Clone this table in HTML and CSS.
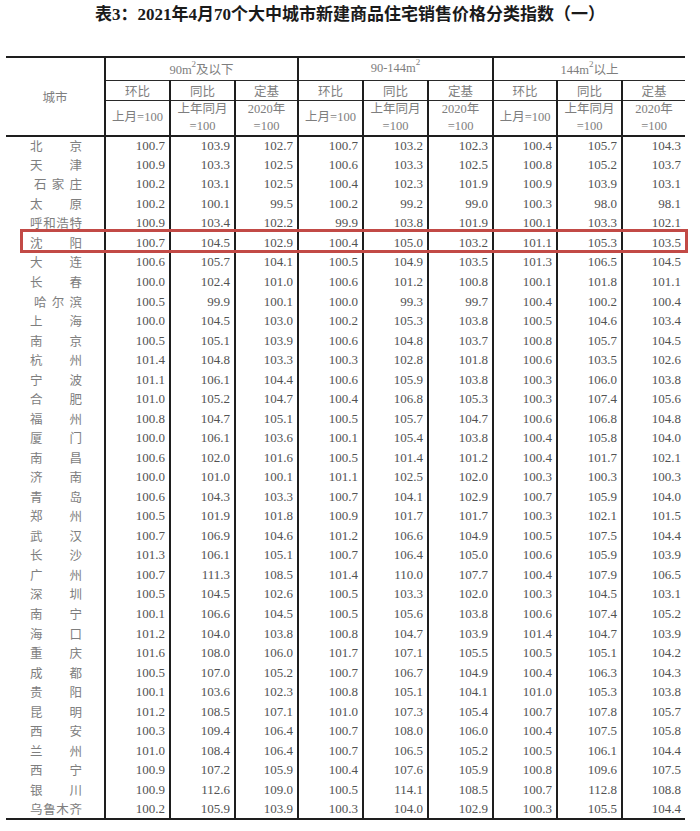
FILE: index.html
```html
<!DOCTYPE html>
<html lang="zh-CN">
<head>
<meta charset="utf-8">
<title>表3</title>
<link rel="stylesheet" href="styles.css">
</head>
<body>
<h1 class="title">表3：2021年4月70个大中城市新建商品住宅销售价格分类指数（一）</h1>
<div class="wrap">
<table class="tbl">
<colgroup>
<col class="w-city"><col class="w65"><col class="w65"><col class="w63"><col class="w65"><col class="w65"><col class="w65"><col class="w64"><col class="w65"><col class="w63">
</colgroup>
<thead>
<tr class="h1">
<th class="city" rowspan="3">城市</th>
<th class="grp" colspan="3">90m<sup>2</sup>及以下</th>
<th class="grp" colspan="3">90-144m<sup>2</sup></th>
<th class="grp" colspan="3">144m<sup>2</sup>以上</th>
</tr>
<tr class="h2">
<th>环比</th><th>同比</th><th>定基</th>
<th>环比</th><th>同比</th><th>定基</th>
<th>环比</th><th>同比</th><th>定基</th>
</tr>
<tr class="h3">
<th>上月=100</th><th>上年同月<br>=100</th><th>2020年<br>=100</th>
<th>上月=100</th><th>上年同月<br>=100</th><th>2020年<br>=100</th>
<th>上月=100</th><th>上年同月<br>=100</th><th>2020年<br>=100</th>
</tr>
</thead>
<tbody>
<tr><td class="c"><span>北京</span></td><td class="n">100.7</td><td class="n">103.9</td><td class="n">102.7</td><td class="n">100.7</td><td class="n">103.2</td><td class="n">102.3</td><td class="n">100.4</td><td class="n">105.7</td><td class="n">104.3</td></tr>
<tr><td class="c"><span>天津</span></td><td class="n">100.9</td><td class="n">103.3</td><td class="n">102.5</td><td class="n">100.6</td><td class="n">103.3</td><td class="n">102.5</td><td class="n">100.8</td><td class="n">105.2</td><td class="n">103.7</td></tr>
<tr><td class="c"><span class="s3">石家庄</span></td><td class="n">100.2</td><td class="n">103.1</td><td class="n">102.5</td><td class="n">100.4</td><td class="n">102.3</td><td class="n">101.9</td><td class="n">100.9</td><td class="n">103.9</td><td class="n">103.1</td></tr>
<tr><td class="c"><span>太原</span></td><td class="n">100.2</td><td class="n">100.1</td><td class="n">99.5</td><td class="n">100.2</td><td class="n">99.2</td><td class="n">99.0</td><td class="n">100.3</td><td class="n">98.0</td><td class="n">98.1</td></tr>
<tr><td class="c"><span>呼和浩特</span></td><td class="n">100.9</td><td class="n">103.4</td><td class="n">102.2</td><td class="n">99.9</td><td class="n">103.8</td><td class="n">101.9</td><td class="n">100.1</td><td class="n">103.3</td><td class="n">102.1</td></tr>
<tr class="hl"><td class="c"><span>沈阳</span><div class="mark"></div></td><td class="n">100.7</td><td class="n">104.5</td><td class="n">102.9</td><td class="n">100.4</td><td class="n">105.0</td><td class="n">103.2</td><td class="n">101.1</td><td class="n">105.3</td><td class="n">103.5</td></tr>
<tr><td class="c"><span>大连</span></td><td class="n">100.6</td><td class="n">105.7</td><td class="n">104.1</td><td class="n">100.5</td><td class="n">104.9</td><td class="n">103.5</td><td class="n">101.3</td><td class="n">106.5</td><td class="n">104.5</td></tr>
<tr><td class="c"><span>长春</span></td><td class="n">100.0</td><td class="n">102.4</td><td class="n">101.0</td><td class="n">100.6</td><td class="n">101.2</td><td class="n">100.8</td><td class="n">100.1</td><td class="n">101.8</td><td class="n">101.1</td></tr>
<tr><td class="c"><span class="s3">哈尔滨</span></td><td class="n">100.5</td><td class="n">99.9</td><td class="n">100.1</td><td class="n">100.0</td><td class="n">99.3</td><td class="n">99.7</td><td class="n">100.4</td><td class="n">100.2</td><td class="n">100.4</td></tr>
<tr><td class="c"><span>上海</span></td><td class="n">100.0</td><td class="n">104.5</td><td class="n">103.0</td><td class="n">100.2</td><td class="n">105.3</td><td class="n">103.8</td><td class="n">100.5</td><td class="n">104.6</td><td class="n">103.4</td></tr>
<tr><td class="c"><span>南京</span></td><td class="n">100.5</td><td class="n">105.1</td><td class="n">103.9</td><td class="n">100.6</td><td class="n">104.8</td><td class="n">103.7</td><td class="n">100.8</td><td class="n">105.7</td><td class="n">104.5</td></tr>
<tr><td class="c"><span>杭州</span></td><td class="n">101.4</td><td class="n">104.8</td><td class="n">103.3</td><td class="n">100.3</td><td class="n">102.8</td><td class="n">101.8</td><td class="n">100.6</td><td class="n">103.5</td><td class="n">102.6</td></tr>
<tr><td class="c"><span>宁波</span></td><td class="n">101.1</td><td class="n">106.1</td><td class="n">104.4</td><td class="n">100.6</td><td class="n">105.9</td><td class="n">103.8</td><td class="n">100.3</td><td class="n">106.0</td><td class="n">103.8</td></tr>
<tr><td class="c"><span>合肥</span></td><td class="n">101.0</td><td class="n">105.2</td><td class="n">104.7</td><td class="n">100.4</td><td class="n">106.8</td><td class="n">105.3</td><td class="n">100.3</td><td class="n">107.4</td><td class="n">105.6</td></tr>
<tr><td class="c"><span>福州</span></td><td class="n">100.8</td><td class="n">104.7</td><td class="n">105.1</td><td class="n">100.5</td><td class="n">105.7</td><td class="n">104.7</td><td class="n">100.6</td><td class="n">106.8</td><td class="n">104.8</td></tr>
<tr><td class="c"><span>厦门</span></td><td class="n">100.0</td><td class="n">106.1</td><td class="n">103.6</td><td class="n">100.1</td><td class="n">105.4</td><td class="n">103.8</td><td class="n">100.4</td><td class="n">105.8</td><td class="n">104.0</td></tr>
<tr><td class="c"><span>南昌</span></td><td class="n">100.6</td><td class="n">102.0</td><td class="n">101.6</td><td class="n">100.5</td><td class="n">101.4</td><td class="n">101.2</td><td class="n">100.4</td><td class="n">101.7</td><td class="n">102.1</td></tr>
<tr><td class="c"><span>济南</span></td><td class="n">100.0</td><td class="n">101.0</td><td class="n">100.1</td><td class="n">101.1</td><td class="n">102.5</td><td class="n">102.0</td><td class="n">100.3</td><td class="n">100.3</td><td class="n">100.3</td></tr>
<tr><td class="c"><span>青岛</span></td><td class="n">100.6</td><td class="n">104.3</td><td class="n">103.3</td><td class="n">100.7</td><td class="n">104.1</td><td class="n">102.9</td><td class="n">100.7</td><td class="n">105.9</td><td class="n">104.0</td></tr>
<tr><td class="c"><span>郑州</span></td><td class="n">100.5</td><td class="n">101.9</td><td class="n">101.8</td><td class="n">100.9</td><td class="n">101.7</td><td class="n">101.7</td><td class="n">100.3</td><td class="n">102.1</td><td class="n">101.5</td></tr>
<tr><td class="c"><span>武汉</span></td><td class="n">100.7</td><td class="n">106.9</td><td class="n">104.6</td><td class="n">101.2</td><td class="n">106.6</td><td class="n">104.9</td><td class="n">100.5</td><td class="n">107.5</td><td class="n">104.4</td></tr>
<tr><td class="c"><span>长沙</span></td><td class="n">101.3</td><td class="n">106.1</td><td class="n">105.1</td><td class="n">100.7</td><td class="n">106.4</td><td class="n">105.0</td><td class="n">100.6</td><td class="n">105.9</td><td class="n">103.9</td></tr>
<tr><td class="c"><span>广州</span></td><td class="n">100.7</td><td class="n">111.3</td><td class="n">108.5</td><td class="n">101.4</td><td class="n">110.0</td><td class="n">107.7</td><td class="n">100.4</td><td class="n">107.9</td><td class="n">106.5</td></tr>
<tr><td class="c"><span>深圳</span></td><td class="n">100.5</td><td class="n">104.5</td><td class="n">102.6</td><td class="n">100.5</td><td class="n">103.3</td><td class="n">102.0</td><td class="n">100.3</td><td class="n">104.5</td><td class="n">103.1</td></tr>
<tr><td class="c"><span>南宁</span></td><td class="n">100.1</td><td class="n">106.6</td><td class="n">104.5</td><td class="n">100.5</td><td class="n">105.6</td><td class="n">103.8</td><td class="n">100.6</td><td class="n">107.4</td><td class="n">105.2</td></tr>
<tr><td class="c"><span>海口</span></td><td class="n">101.2</td><td class="n">104.0</td><td class="n">103.8</td><td class="n">100.8</td><td class="n">104.7</td><td class="n">103.9</td><td class="n">101.4</td><td class="n">104.7</td><td class="n">103.9</td></tr>
<tr><td class="c"><span>重庆</span></td><td class="n">101.6</td><td class="n">108.0</td><td class="n">106.0</td><td class="n">101.7</td><td class="n">107.1</td><td class="n">105.5</td><td class="n">100.5</td><td class="n">105.1</td><td class="n">104.2</td></tr>
<tr><td class="c"><span>成都</span></td><td class="n">100.5</td><td class="n">107.0</td><td class="n">105.2</td><td class="n">100.7</td><td class="n">106.7</td><td class="n">104.9</td><td class="n">100.4</td><td class="n">106.3</td><td class="n">104.3</td></tr>
<tr><td class="c"><span>贵阳</span></td><td class="n">100.1</td><td class="n">103.6</td><td class="n">102.3</td><td class="n">100.8</td><td class="n">105.1</td><td class="n">104.1</td><td class="n">101.0</td><td class="n">105.3</td><td class="n">103.8</td></tr>
<tr><td class="c"><span>昆明</span></td><td class="n">101.2</td><td class="n">108.5</td><td class="n">107.1</td><td class="n">101.0</td><td class="n">107.3</td><td class="n">105.4</td><td class="n">100.7</td><td class="n">107.8</td><td class="n">105.7</td></tr>
<tr><td class="c"><span>西安</span></td><td class="n">100.3</td><td class="n">109.4</td><td class="n">106.4</td><td class="n">100.7</td><td class="n">108.0</td><td class="n">106.0</td><td class="n">100.4</td><td class="n">107.5</td><td class="n">105.8</td></tr>
<tr><td class="c"><span>兰州</span></td><td class="n">101.0</td><td class="n">108.4</td><td class="n">106.4</td><td class="n">100.7</td><td class="n">106.5</td><td class="n">105.2</td><td class="n">100.5</td><td class="n">106.1</td><td class="n">104.4</td></tr>
<tr><td class="c"><span>西宁</span></td><td class="n">100.9</td><td class="n">107.2</td><td class="n">105.9</td><td class="n">100.4</td><td class="n">107.6</td><td class="n">105.9</td><td class="n">100.8</td><td class="n">109.6</td><td class="n">107.5</td></tr>
<tr><td class="c"><span>银川</span></td><td class="n">100.9</td><td class="n">112.6</td><td class="n">109.0</td><td class="n">100.5</td><td class="n">114.1</td><td class="n">108.5</td><td class="n">100.7</td><td class="n">112.8</td><td class="n">108.8</td></tr>
<tr><td class="c"><span>乌鲁木齐</span></td><td class="n">100.2</td><td class="n">105.9</td><td class="n">103.9</td><td class="n">100.3</td><td class="n">104.0</td><td class="n">102.9</td><td class="n">100.3</td><td class="n">105.5</td><td class="n">104.4</td></tr>
</tbody>
</table>
</div>
</body>
</html>
```

FILE: styles.css
```css
* { box-sizing: border-box; }

html, body {
  margin: 0;
  padding: 0;
  background: #ffffff;
}

body {
  font-family: "Liberation Serif", "Noto Sans CJK SC", serif;
  color: #4d4d4d;
}

.title {
  margin: 0;
  height: 56px;
  padding-top: 5px;
  text-align: center;
  font-size: 17px;
  line-height: 20px;
  font-weight: bold;
  color: #1a1a1a;
  font-family: "Liberation Serif", "Noto Sans CJK SC", serif;
}

.wrap {
  padding-left: 6px;
}

.tbl {
  border-collapse: collapse;
  table-layout: fixed;
  width: 679px;
}

.w-city { width: 99px; }
.w65 { width: 65px; }
.w64 { width: 64px; }
.w63 { width: 63px; }

/* header */
.tbl th {
  padding: 0;
  font-weight: normal;
  font-size: 12.5px;
  color: #7e7e7e;
  text-align: center;
  vertical-align: middle;
  font-family: "Liberation Serif", "Noto Sans CJK SC", serif;
}

.tbl th sup {
  font-size: 9px;
  line-height: 0;
  vertical-align: 7px;
}

.h1 th {
  height: 23px;
  border-top: 2px solid #1e1e1e;
}

.h1 th.grp {
  border-left: 2px solid #1e1e1e;
  border-bottom: 1px solid #2a2a2a;
}

.tbl th.city {
  font-family: "Noto Sans CJK SC", sans-serif;
  font-size: 12.5px;
  color: #7e7e7e;
  border-top: 2px solid #1e1e1e;
  border-bottom: 2px solid #1e1e1e;
}

.h2 th {
  height: 20px;
  border-left: 2px solid #1e1e1e;
  border-bottom: 1px solid #2a2a2a;
}

.h3 th {
  height: 35px;
  line-height: 17px;
  border-left: 2px solid #1e1e1e;
  border-bottom: 2px solid #1e1e1e;
}

/* body */
.tbl td {
  height: 19.54px;
  padding: 0 4px 0 0;
  font-size: 13px;
  line-height: 18px;
  text-align: right;
  color: #525252;
  white-space: nowrap;
}

.tbl td.n {
  border-left: 2px solid #1e1e1e;
}

.tbl td.c {
  padding: 0;
  text-align: left;
  position: relative;
}

.tbl td.c span {
  display: block;
  width: 52px;
  margin-left: 24px;
  font-family: "Noto Sans CJK SC", sans-serif;
  font-size: 12.5px;
  color: #7e7e7e;
  text-align: justify;
  text-align-last: justify;
}

.tbl td.c span.s3 {
  width: 48px;
  margin-left: 28px;
}

.tbl tbody tr:last-child td {
  border-bottom: 2px solid #1e1e1e;
}

/* highlight annotation over the 沈阳 row */
.mark {
  position: absolute;
  left: 14px;
  top: -4px;
  width: 668px;
  height: 24px;
  border: 3px solid #c24a46;
  pointer-events: none;
}
```
